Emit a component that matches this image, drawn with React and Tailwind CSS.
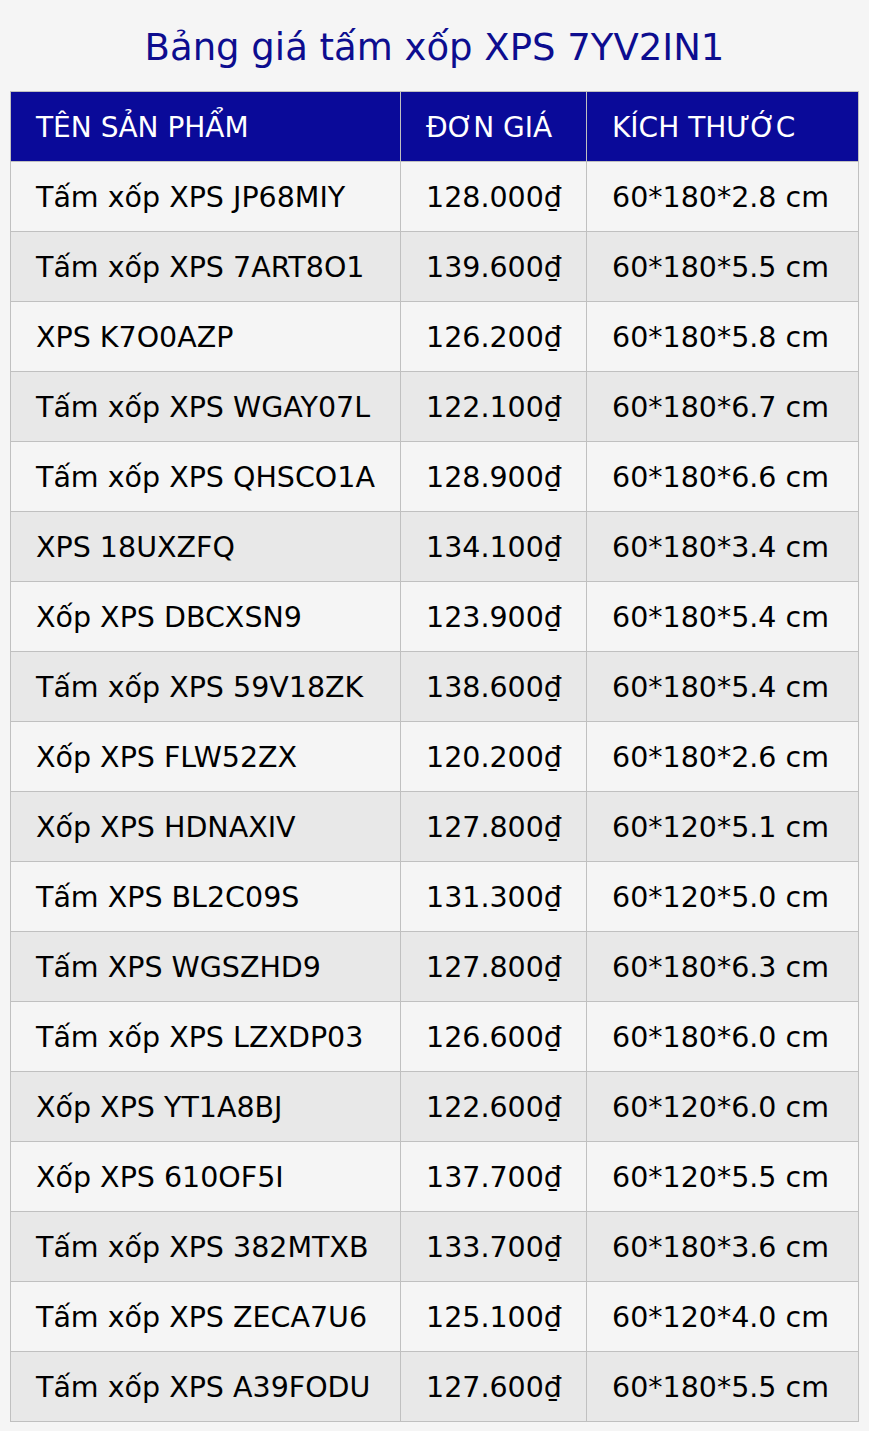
import React from "react";

const rows = [
    ["Tấm xốp XPS JP68MIY", "128.000₫", "60*180*2.8 cm"],
    ["Tấm xốp XPS 7ART8O1", "139.600₫", "60*180*5.5 cm"],
    ["XPS K7O0AZP", "126.200₫", "60*180*5.8 cm"],
    ["Tấm xốp XPS WGAY07L", "122.100₫", "60*180*6.7 cm"],
    ["Tấm xốp XPS QHSCO1A", "128.900₫", "60*180*6.6 cm"],
    ["XPS 18UXZFQ", "134.100₫", "60*180*3.4 cm"],
    ["Xốp XPS DBCXSN9", "123.900₫", "60*180*5.4 cm"],
    ["Tấm xốp XPS 59V18ZK", "138.600₫", "60*180*5.4 cm"],
    ["Xốp XPS FLW52ZX", "120.200₫", "60*180*2.6 cm"],
    ["Xốp XPS HDNAXIV", "127.800₫", "60*120*5.1 cm"],
    ["Tấm XPS BL2C09S", "131.300₫", "60*120*5.0 cm"],
    ["Tấm XPS WGSZHD9", "127.800₫", "60*180*6.3 cm"],
    ["Tấm xốp XPS LZXDP03", "126.600₫", "60*180*6.0 cm"],
    ["Xốp XPS YT1A8BJ", "122.600₫", "60*120*6.0 cm"],
    ["Xốp XPS 610OF5I", "137.700₫", "60*120*5.5 cm"],
    ["Tấm xốp XPS 382MTXB", "133.700₫", "60*180*3.6 cm"],
    ["Tấm xốp XPS ZECA7U6", "125.100₫", "60*120*4.0 cm"],
    ["Tấm xốp XPS A39FODU", "127.600₫", "60*180*5.5 cm"],
];

const App = () => {
    return (
        <div className="min-h-[1431px] bg-[#f5f5f5] px-[10px] pt-[24px] pb-[11px] font-['DejaVu_Sans',sans-serif]">
            <h1 className="text-center text-[37px] leading-[48px] text-[#0d0d8f] mb-[19px]">
                Bảng giá tấm xốp XPS 7YV2IN1
            </h1>

            <table className="w-[848px] table-fixed border-collapse text-[28.5px]">
                <colgroup>
                    <col className="w-[390px]"/>
                    <col className="w-[186px]"/>
                    <col className="w-[272px]"/>
                </colgroup>
                <thead>
                <tr className="h-[70px] bg-[#0a0a99] text-white text-[28px]">
                    <th className="border border-[#c0c0c0] pl-[25px] pt-[2px] text-left font-normal">TÊN SẢN PHẨM</th>
                    <th className="border border-[#c0c0c0] pl-[25px] pt-[2px] text-left font-normal">ĐƠN GIÁ</th>
                    <th className="border border-[#c0c0c0] pl-[25px] pt-[2px] text-left font-normal">KÍCH THƯỚC</th>
                </tr>
                </thead>
                <tbody>
                {rows.map((r, i) => (
                    <tr key={i} className={"h-[70px] text-black " + (i % 2 === 0 ? "bg-[#f5f5f5]" : "bg-[#e8e8e8]")}>
                        <td className="border border-[#c0c0c0] pl-[25px] pt-[4px] whitespace-nowrap">{r[0]}</td>
                        <td className="border border-[#c0c0c0] pl-[25px] pt-[4px] whitespace-nowrap">{r[1]}</td>
                        <td className="border border-[#c0c0c0] pl-[25px] pt-[4px] whitespace-nowrap">{r[2]}</td>
                    </tr>
                ))}
                </tbody>
            </table>
        </div>
    );
}

export default App;
